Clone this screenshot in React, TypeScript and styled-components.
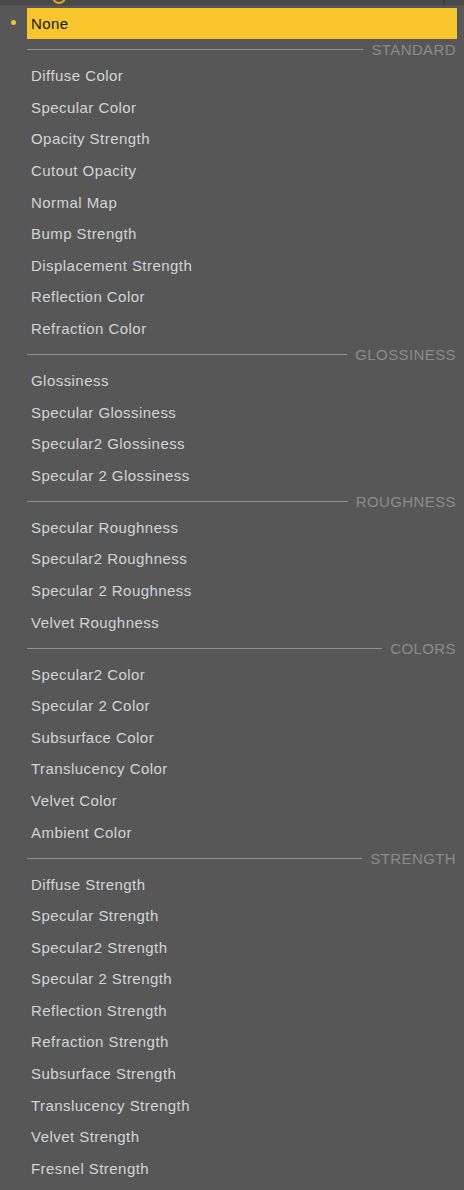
import React from "react";
import styled, { createGlobalStyle } from "styled-components";

const GlobalStyle = createGlobalStyle`
  html, body {
    margin: 0;
    padding: 0;
    background: #575757;
  }
  body {
    font-family: "Liberation Sans", Arial, sans-serif;
  }
`;

const Panel = styled.div`
  position: relative;
  width: 464px;
  height: 1190px;
  background: #575757;
  overflow: hidden;
`;

const TopStrip = styled.div`
  position: relative;
  height: 5px;
  background: #494949;
  border-bottom: 1px solid #505050;
  margin-bottom: 2px;
`;

const StripRing = styled.div`
  position: absolute;
  left: 52px;
  top: -10px;
  width: 10px;
  height: 10px;
  border: 2px solid #d9a829;
  border-radius: 50%;
`;

const StripDivider = styled.div`
  position: absolute;
  left: 443px;
  top: 0;
  width: 2px;
  height: 5px;
  background: #3c3c3c;
`;

const List = styled.div`
  display: flex;
  flex-direction: column;
  padding-right: 7px;
`;

const Row = styled.div`
  display: flex;
  align-items: center;
  height: 31.6px;
`;

const Marker = styled.div`
  width: 27px;
  display: flex;
  justify-content: center;
  padding-right: 1px;
  box-sizing: border-box;
`;

const Dot = styled.span`
  width: 5px;
  height: 5px;
  border-radius: 50%;
  background: #f5c12c;
  margin-top: -3px;
`;

const Label = styled.div<{ $selected?: boolean }>`
  flex: 1;
  height: ${(p) => (p.$selected ? "31px" : "100%")};
  display: flex;
  align-items: center;
  padding-left: 4px;
  font-size: 15px;
  letter-spacing: 0.45px;
  color: ${(p) => (p.$selected ? "#151515" : "#d2d5d8")};
  background: ${(p) => (p.$selected ? "#f9c52d" : "transparent")};
  align-self: flex-start;
`;

const Header = styled.div`
  display: flex;
  align-items: center;
  height: 20.4px;
  padding-left: 27px;
  gap: 8px;
`;

const Rule = styled.div`
  flex: 1;
  height: 1px;
  background: #8f8f8f;
`;

const HeaderText = styled.span`
  font-size: 15px;
  letter-spacing: 0.4px;
  color: #8b8b8b;
  text-transform: uppercase;
  margin-right: 1px;
`;

const sections: { title: string; items: string[] }[] = [
  {
    title: "Standard",
    items: [
      "Diffuse Color",
      "Specular Color",
      "Opacity Strength",
      "Cutout Opacity",
      "Normal Map",
      "Bump Strength",
      "Displacement Strength",
      "Reflection Color",
      "Refraction Color",
    ],
  },
  {
    title: "Glossiness",
    items: [
      "Glossiness",
      "Specular Glossiness",
      "Specular2 Glossiness",
      "Specular 2 Glossiness",
    ],
  },
  {
    title: "Roughness",
    items: [
      "Specular Roughness",
      "Specular2 Roughness",
      "Specular 2 Roughness",
      "Velvet Roughness",
    ],
  },
  {
    title: "Colors",
    items: [
      "Specular2 Color",
      "Specular 2 Color",
      "Subsurface Color",
      "Translucency Color",
      "Velvet Color",
      "Ambient Color",
    ],
  },
  {
    title: "Strength",
    items: [
      "Diffuse Strength",
      "Specular Strength",
      "Specular2 Strength",
      "Specular 2 Strength",
      "Reflection Strength",
      "Refraction Strength",
      "Subsurface Strength",
      "Translucency Strength",
      "Velvet Strength",
      "Fresnel Strength",
    ],
  },
];

export default function App() {
  return (
    <>
      <GlobalStyle />
      <Panel>
        <TopStrip>
          <StripRing />
          <StripDivider />
        </TopStrip>
        <List>
          <Row>
            <Marker>
              <Dot />
            </Marker>
            <Label $selected>None</Label>
          </Row>
          {sections.map((s) => (
            <React.Fragment key={s.title}>
              <Header>
                <Rule />
                <HeaderText>{s.title}</HeaderText>
              </Header>
              {s.items.map((item) => (
                <Row key={item}>
                  <Marker />
                  <Label>{item}</Label>
                </Row>
              ))}
            </React.Fragment>
          ))}
        </List>
      </Panel>
    </>
  );
}
